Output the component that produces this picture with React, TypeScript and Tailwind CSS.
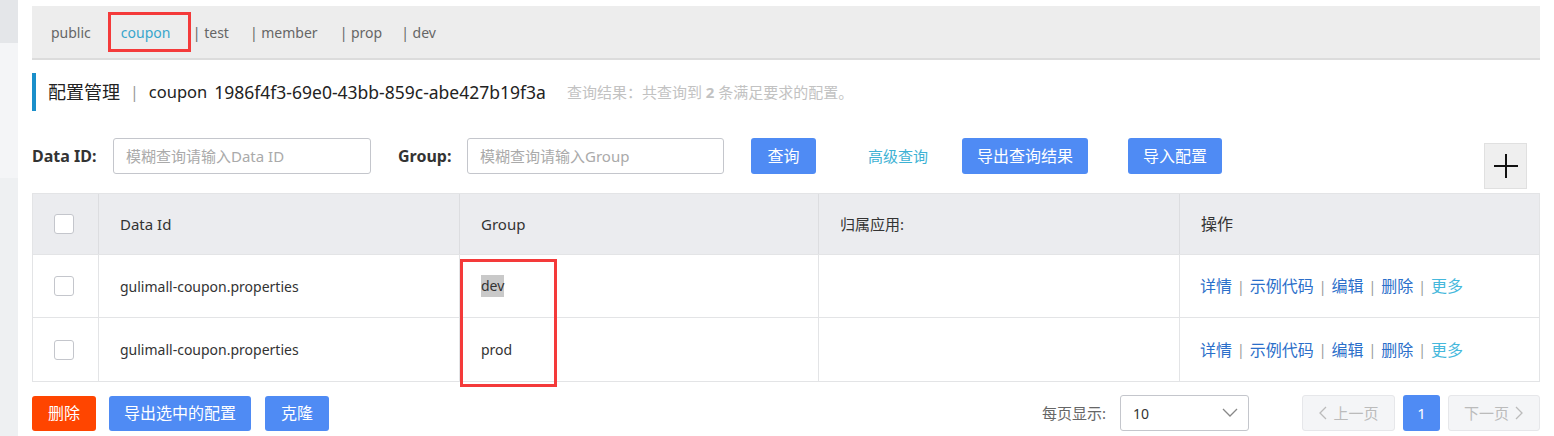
import React from 'react';

const font = { fontFamily: '"Noto Sans", "Noto Sans CJK SC", sans-serif' };

const tabs = [
  { name: 'public', ml: 'ml-[19px]' },
  { name: 'coupon', ml: 'ml-[17px]', active: true },
  { name: '| test', ml: 'ml-[2px]' },
  { name: '| member', ml: 'ml-[21px]' },
  { name: '| prop', ml: 'ml-[22px]' },
  { name: '| dev', ml: 'ml-[19px]' },
];

const rows = [
  { id: 'gulimall-coupon.properties', group: 'dev', selected: true },
  { id: 'gulimall-coupon.properties', group: 'prod' },
];

const Checkbox = () => (
  <span className="block w-[20px] h-[20px] rounded-[3px] border border-[#c4c6cc] bg-white" />
);

const Sep = () => <span className="mx-[5px] text-[14px] text-[#999]">|</span>;

const Actions = () => (
  <div className="flex items-center text-[16px] text-[#2b6fca]">
    <span>详情</span>
    <Sep />
    <span>示例代码</span>
    <Sep />
    <span>编辑</span>
    <Sep />
    <span>删除</span>
    <Sep />
    <span className="text-[#45b8dc]">更多</span>
  </div>
);

export default function App() {
  return (
    <div className="w-[1554px] h-[436px] overflow-hidden bg-white flex text-[#333]" style={font}>
      <div className="w-[18px] flex flex-col shrink-0">
        <div className="h-[43px] bg-[#e4e6e9]" />
        <div className="h-[135px] bg-[#f4f5f7]" />
        <div className="flex-1 bg-[#eef0f2]" />
      </div>

      <div className="flex flex-col pl-[14px] w-[1522px] pt-[6px]">
        {/* namespace tabs */}
        <div className="h-[54px] bg-[#ededed] border-b-2 border-[#dcdcdc] flex items-center text-[14px] text-[#666]">
          {tabs.map((t) =>
            t.active ? (
              <div
                key={t.name}
                className={`${t.ml} w-[83px] h-[40px] border-[3px] border-[#f43a3a] flex items-center pl-[10px] text-[#38a6cc]`}
              >
                {t.name}
              </div>
            ) : (
              <span key={t.name} className={t.ml}>
                {t.name}
              </span>
            )
          )}
        </div>

        {/* title */}
        <div className="mt-[13px] h-[38px] flex items-center border-l-[4px] border-[#1a8fca] pl-[12px]">
          <span className="text-[18px] text-[#222]">配置管理</span>
          <span className="text-[16px] text-[#999] mx-[10px]">|</span>
          <span className="text-[16.5px] text-[#222]">coupon</span>
          <span className="text-[17.5px] text-[#222] ml-[7px]">1986f4f3-69e0-43bb-859c-abe427b19f3a</span>
          <span className="text-[15px] text-[#c2c2c2] ml-[21px]">
            查询结果：共查询到 <b className="font-bold">2</b> 条满足要求的配置。
          </span>
        </div>

        {/* search row */}
        <div className="mt-[27px] flex items-start">
          <div className="h-[36px] flex items-center">
            <span className="text-[16px] font-bold text-[#333] w-[81px]">Data ID:</span>
            <div className="w-[258px] h-[36px] border border-[#c4c6cc] rounded-[3px] flex items-center pl-[12px] text-[15px] text-[#aaa]">
              模糊查询请输入Data ID
            </div>
            <span className="text-[16px] font-bold text-[#333] ml-[27px] w-[69px]">Group:</span>
            <div className="w-[257px] h-[36px] border border-[#c4c6cc] rounded-[3px] flex items-center pl-[12px] text-[15px] text-[#aaa]">
              模糊查询请输入Group
            </div>
            <button className="ml-[27px] w-[65px] h-[36px] rounded-[3px] bg-[#4f8bf4] text-white text-[16px]">查询</button>
            <span className="ml-[52px] text-[15px] text-[#3eb2d4]">高级查询</span>
            <button className="ml-[34px] w-[126px] h-[36px] rounded-[3px] bg-[#4f8bf4] text-white text-[16px]">导出查询结果</button>
            <button className="ml-[40px] w-[94px] h-[36px] rounded-[3px] bg-[#4f8bf4] text-white text-[16px]">导入配置</button>
          </div>
          <div className="ml-auto mr-[13px] mt-[5px] w-[43px] h-[46px] bg-[#efefef] border border-[#e0e0e0] flex items-center justify-center">
            <svg width="26" height="26" viewBox="0 0 26 26">
              <path d="M13 1v24M1 13h24" stroke="#111" strokeWidth="2" />
            </svg>
          </div>
        </div>

        {/* table */}
        <div className="relative mt-[4px] w-[1508px] border border-[#e3e4e6]">
          <div className="flex h-[61px] bg-[#ebecef] text-[15px] text-[#333] border-b border-[#e3e4e6]">
            <div className="w-[66px] flex items-center pl-[21px] border-r border-[#dcdde0]">
              <Checkbox />
            </div>
            <div className="w-[361px] flex items-center pl-[21px] border-r border-[#dcdde0]">Data Id</div>
            <div className="w-[359px] flex items-center pl-[21px] border-r border-[#dcdde0]">Group</div>
            <div className="w-[361px] flex items-center pl-[21px] border-r border-[#dcdde0]">归属应用:</div>
            <div className="flex-1 flex items-center pl-[21px] text-[16px]">操作</div>
          </div>
          {rows.map((r, i) => (
            <div
              key={i}
              className={`flex h-[63px] text-[14px] text-[#333] ${i === 0 ? 'border-b border-[#e3e4e6]' : ''}`}
            >
              <div className="w-[66px] flex items-center pl-[21px] border-r border-[#e3e4e6]">
                <Checkbox />
              </div>
              <div className="w-[361px] flex items-center pl-[21px] border-r border-[#e3e4e6]">{r.id}</div>
              <div className="w-[359px] flex items-center pl-[21px] border-r border-[#e3e4e6]">
                {r.selected ? <span className="bg-[#c9c9c9] leading-[22px]">{r.group}</span> : r.group}
              </div>
              <div className="w-[361px] flex items-center pl-[21px] border-r border-[#e3e4e6]" />
              <div className="flex-1 flex items-center pl-[20px]">
                <Actions />
              </div>
            </div>
          ))}
          <div className="absolute left-[427px] top-[65px] w-[97px] h-[128px] border-[3px] border-[#f43a3a]" />
        </div>

        {/* footer */}
        <div className="mt-[13px] w-[1508px] flex items-center">
          <button className="w-[64px] h-[35px] rounded-[3px] bg-[#ff4500] text-white text-[16px]">删除</button>
          <button className="ml-[13px] w-[142px] h-[35px] rounded-[3px] bg-[#4f8bf4] text-white text-[16px]">导出选中的配置</button>
          <button className="ml-[14px] w-[64px] h-[35px] rounded-[3px] bg-[#4f8bf4] text-white text-[16px]">克隆</button>

          <span className="ml-auto text-[15px] text-[#666]">每页显示:</span>
          <div className="ml-[14px] w-[129px] h-[36px] border border-[#c4c6cc] rounded-[3px] flex items-center pl-[12px] pr-[10px] text-[14px] text-[#333]">
            <span>10</span>
            <svg className="ml-auto" width="16" height="10" viewBox="0 0 16 10">
              <path d="M1 1l7 7 7-7" fill="none" stroke="#888" strokeWidth="1.3" />
            </svg>
          </div>
          <div className="ml-[53px] w-[93px] h-[36px] rounded-[3px] bg-[#f4f5f7] border border-[#e6e7ea] flex items-center justify-center gap-[6px] text-[15px] text-[#bbb]">
            <svg width="9" height="14" viewBox="0 0 9 14">
              <path d="M8 1L2 7l6 6" fill="none" stroke="#bbb" strokeWidth="1.3" />
            </svg>
            <span>上一页</span>
          </div>
          <div className="ml-[8px] w-[37px] h-[36px] rounded-[3px] bg-[#4f8bf4] text-white text-[15px] flex items-center justify-center">1</div>
          <div className="ml-[8px] w-[92px] h-[36px] rounded-[3px] bg-[#f4f5f7] border border-[#e6e7ea] flex items-center justify-center gap-[6px] text-[15px] text-[#bbb]">
            <span>下一页</span>
            <svg width="9" height="14" viewBox="0 0 9 14">
              <path d="M1 1l6 6-6 6" fill="none" stroke="#bbb" strokeWidth="1.3" />
            </svg>
          </div>
        </div>
      </div>
    </div>
  );
}
